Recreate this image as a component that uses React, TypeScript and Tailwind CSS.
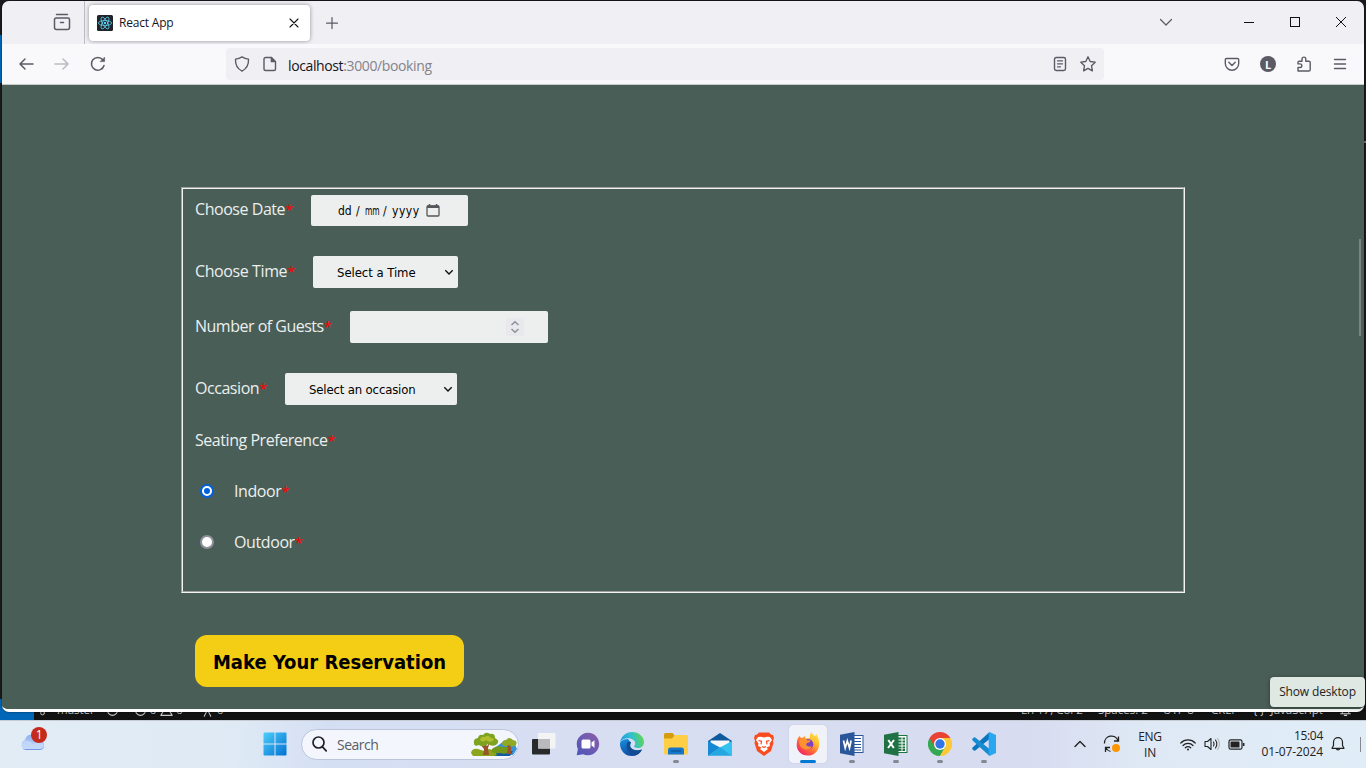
import React from "react";

type IconProps = { children: React.ReactNode; size?: number; box?: string; className?: string };

function Line({ children, size = 16, box = "0 0 16 16", className = "" }: IconProps) {
  return (
    <svg width={size} height={size} viewBox={box} fill="none" stroke="currentColor" strokeWidth="1.25" strokeLinecap="round" strokeLinejoin="round" className={"shrink-0 " + className}>
      {children}
    </svg>
  );
}

function TitleBar() {
  return (
    <div className="flex h-[43px] shrink-0 items-center bg-[#f0eff4] text-[#5b5b66]">
      <div className="flex h-full w-[83px] items-center justify-end border-r border-[#bdbcc3] pr-[13px]">
        <Line size={18} box="0 0 18 18" className="mb-px">
          <path d="M3.500 1.500h11M3 5h12a1.500 1.500 0 0 1 1.500 1.500v8a2 2 0 0 1-2 2H3.500a2 2 0 0 1-2-2v-8A1.500 1.500 0 0 1 3 5zM7.500 9.500h3" strokeWidth="1.500" />
        </Line>
      </div>
      <div className="ml-[4px] flex h-[36px] w-[221px] items-center rounded-[4px] bg-white pr-[10px] pl-[8px] shadow-[0_0_4px_rgba(0,0,0,0.4)]">
        <svg width="16" height="16" viewBox="0 0 16 16" fill="none" stroke="#5ed3f3" strokeWidth="0.8">
          <rect width="16" height="16" rx="1.500" fill="#20232a" stroke="none" />
          <ellipse cx="8" cy="8" rx="6.600" ry="2.500" />
          <ellipse cx="8" cy="8" rx="6.600" ry="2.500" transform="rotate(60 8 8)" />
          <ellipse cx="8" cy="8" rx="6.600" ry="2.500" transform="rotate(120 8 8)" />
          <circle cx="8" cy="8" r="1.200" fill="#5ed3f3" stroke="none" />
        </svg>
        <span className="ml-[6px] text-[12px] tracking-[-0.2px] text-[#15141a]">React App</span>
        <Line size={12} box="0 0 12 12" className="ml-auto text-[#15141a]">
          <path d="M2 2l8 8M10 2l-8 8" strokeWidth="1.100" />
        </Line>
      </div>
      <Line size={14} box="0 0 14 14" className="ml-[15px]">
        <path d="M7 1.500v11M1.500 7h11" />
      </Line>
      <Line size={14} box="0 0 14 14" className="mb-[2px] ml-auto">
        <path d="M1.500 4.500L7 10l5.500-5.500" />
      </Line>
      <svg width="102" height="12" viewBox="0 0 102 12" fill="none" stroke="#111" className="mr-[18px] mb-px ml-[71px]">
        <path d="M0 6.500h10" />
        <rect x="46.500" y="1.500" width="9" height="9" />
        <path d="M92 1l10 10M102 1l-10 10" />
      </svg>
    </div>
  );
}

function ToolBar() {
  return (
    <div className="flex h-[41px] shrink-0 items-center border-b border-[#c8c9cc] bg-[#f9f9fb] pr-[16px] pl-[16px] text-[#5b5b66]">
      <Line><path d="M15 8H2M7 3L2 8l5 5" strokeWidth="1.500" /></Line>
      <Line className="ml-[20px] text-[#b9b9c0]"><path d="M1 8h13M9 3l5 5-5 5" strokeWidth="1.500" /></Line>
      <Line className="ml-[20px]">
        <path d="M14 9.500A6.400 6.400 0 1 1 12.800 3.800" strokeWidth="1.500" />
        <path d="M14.600 1.400v4.200h-4.200z" fill="currentColor" strokeWidth="0.600" />
      </Line>
      <div className="ml-[120px] flex h-[32px] w-[878px] items-center rounded-[4px] bg-[#f0eff4] px-[8px]">
        <Line><path d="M8 .9c1.900 1.300 4 2 6.500 2.200.3 5.200-1.600 9.400-6.500 12C3.100 12.500 1.200 8.300 1.500 3.100 4 2.900 6.100 2.200 8 .9z" strokeWidth="1.400" /></Line>
        <Line className="ml-[12px]">
          <path d="M3.500 1.500h5.800l4.200 4.200v7.300a1.500 1.500 0 0 1-1.500 1.500H3.500A1.500 1.500 0 0 1 2 13V3a1.500 1.500 0 0 1 1.500-1.500z" strokeWidth="1.400" />
          <path d="M9.300 1.500v4.200h4.200z" fill="currentColor" />
        </Line>
        <span className="mt-[2px] ml-[10px] text-[14px] tracking-[-0.38px] text-[#15141a]">localhost<span className="text-[#84838b]">:3000/booking</span></span>
        <Line className="ml-auto">
          <rect x="2.500" y="1.500" width="11" height="13" rx="1.700" strokeWidth="1.400" />
          <path d="M5.500 4.800h5M5.500 7.800h5M5.500 10.800h3" />
        </Line>
        <Line className="ml-[12px]">
          <path d="M8 .8l2.200 4.700 5 .7-3.700 3.500.9 5.200L8 12.400l-4.400 2.500.9-5.200L.8 6.200l5-.7z" strokeWidth="1.350" />
        </Line>
      </div>
      <Line className="ml-auto">
        <path d="M2.500 2.500h11A1.300 1.300 0 0 1 14.700 3.800V7.500a6.700 6.700 0 0 1-13.400 0V3.800A1.300 1.300 0 0 1 2.500 2.500zM4.800 6.300L8 9.400l3.200-3.100" strokeWidth="1.400" />
      </Line>
      <div className="ml-[20px] flex size-[16px] items-center justify-center rounded-full bg-[#5b5b66] text-[11px] leading-none font-bold text-white">L</div>
      <Line className="ml-[20px]">
        <path d="M2 15v-3.500h2a1.800 1.800 0 0 0 0-3.600H2V6.500A1.300 1.300 0 0 1 3.300 5.200H6V3a1.900 1.900 0 0 1 3.800 0v2.200h3A1.300 1.300 0 0 1 14.200 6.500v7.200a1.300 1.300 0 0 1-1.300 1.300z" strokeWidth="1.400" />
      </Line>
      <Line className="ml-[20px]"><path d="M2.500 3.500h11M2.500 8h11M2.500 12.500h11" strokeWidth="1.400" /></Line>
    </div>
  );
}

const star = <span className="inline-block w-[6px] text-[15px] leading-none tracking-normal text-[#ff0000]">*</span>;

function Chevron() {
  return (
    <svg width="10" height="10" viewBox="0 0 10 10" fill="none" stroke="#111" strokeWidth="1.400">
      <path d="M1.300 3.200L5 6.900l3.700-3.700" />
    </svg>
  );
}

function BookingPage() {
  return (
    <div className="flex min-h-0 flex-1 bg-[#495e57] pt-[102px] pl-[179px]">
      <div className="w-[1004px]">
        <div className="h-[406px] border-2 border-[#f4f4f4] [border-style:groove] pt-[6px] pl-[12px] text-[16px] leading-[20px] tracking-[-0.45px] text-[#edefee]">
          <div className="flex h-[31px] items-center">
            <span className="w-[116px] pb-[3px]">Choose Date{star}</span>
            <div className="flex h-[31px] w-[157px] items-center rounded-[2px] bg-[#edefee] pl-[27px] font-['DejaVu_Sans_Condensed','DejaVu_Sans',sans-serif] text-[12px] text-black">
              <span className="flex w-[88px] items-center pt-px tracking-normal">
                <span className="w-[18px]">dd</span>
                <span className="w-[9px]">/</span>
                <span className="w-[18px]"><span className="inline-block origin-left scale-x-[0.7]">mm</span></span>
                <span className="w-[9px]">/</span>
                <span className="tracking-[0.5px]">yyyy</span>
              </span>
              <svg width="14" height="14" viewBox="0 0 14 14" fill="none" stroke="#55565a">
                <rect x="1" y="2" width="12" height="10" rx="1" strokeWidth="1.300" />
                <path d="M1 2.800h12" strokeWidth="2.400" />
                <path d="M3.500 0v3M10.500 0v3" strokeWidth="1.500" />
              </svg>
            </div>
          </div>
          <div className="mt-[30px] flex h-[32px] items-center">
            <span className="w-[118px] pb-[2px] tracking-[-0.4px]">Choose Time{star}</span>
            <div className="flex h-[32px] w-[145px] items-center justify-between rounded-[2px] bg-[#edefee] pr-[4px] pl-[24px] font-['DejaVu_Sans_Condensed','DejaVu_Sans',sans-serif] text-[13px] tracking-[-0.05px] text-black">
              <span className="pt-[2px]">Select a Time</span><Chevron />
            </div>
          </div>
          <div className="mt-[23px] flex h-[32px] items-center">
            <span className="w-[155px] pb-[2px] tracking-[-0.5px]">Number of Guests{star}</span>
            <div className="flex h-[32px] w-[198px] items-center justify-end rounded-[2px] bg-[#edefee] pr-[24px]">
              <div className="flex h-[18px] w-[18px] items-center justify-center bg-[#e9e9ed]">
                <svg width="10" height="14" viewBox="0 0 10 14" fill="none" stroke="#8f8f9d" strokeWidth="1.500">
                  <path d="M1.500 5L5 1.800 8.500 5M1.500 9L5 12.200 8.500 9" />
                </svg>
              </div>
            </div>
          </div>
          <div className="mt-[30px] flex h-[32px] items-center">
            <span className="w-[90px] pb-[2px]">Occasion{star}</span>
            <div className="flex h-[32px] w-[172px] items-center justify-between rounded-[2px] bg-[#edefee] pr-[4px] pl-[24px] font-['DejaVu_Sans_Condensed','DejaVu_Sans',sans-serif] text-[13px] tracking-[-0.15px] text-black">
              <span className="pt-[2px]">Select an occasion</span><Chevron />
            </div>
          </div>
          <div className="mt-[25px] h-[20px]">Seating Preference{star}</div>
          <div className="mt-[31px] flex h-[20px] items-center">
            <span className="ml-[5px] flex size-[14px] items-center justify-center rounded-full border-2 border-[#0060df] bg-white">
              <span className="size-[6px] rounded-full bg-[#0060df]" />
            </span>
            <span className="ml-[20px] tracking-[-0.4px]">Indoor{star}</span>
          </div>
          <div className="mt-[31px] flex h-[20px] items-center">
            <span className="ml-[5px] size-[14px] rounded-full border-2 border-[#8f8f9d] bg-white" />
            <span className="ml-[20px] tracking-[-0.4px]">Outdoor{star}</span>
          </div>
        </div>
        <div className="mt-[42px] ml-[14px] flex h-[52px] w-[269px] items-center justify-center rounded-[12px] bg-[#f4ce14] pt-px font-['DejaVu_Sans_Condensed','DejaVu_Sans',sans-serif] text-[20px] font-bold whitespace-nowrap text-black">
          Make Your Reservation
        </div>
      </div>
      <div className="mt-[52px] mr-[3px] ml-auto h-[97px] w-[2px] bg-[#7d8582]" />
    </div>
  );
}

function StatusStrip() {
  return (
    <div className="absolute top-[699px] left-0 flex h-[22px] w-full items-center bg-[#121212] text-[11.500px] text-[#c8c8c8]">
      <div className="flex h-full w-[34px] items-center justify-center bg-[#0067b8] font-mono text-[11px]">&gt;</div>
      <Line size={12} className="ml-[4px]"><circle cx="6" cy="12" r="2.500" /><path d="M6 9V2" /></Line>
      <span className="ml-[7px]">master</span>
      <Line size={13} className="ml-[11px]"><circle cx="8" cy="8" r="6" /></Line>
      <Line size={13} className="ml-[15px]"><circle cx="8" cy="8" r="6" /></Line>
      <span className="ml-[3px]">0</span>
      <Line size={13} className="ml-[4px]"><path d="M8 2l7 12H1z" /></Line>
      <span className="ml-[3px]">0</span>
      <Line size={13} className="ml-[18px]"><path d="M8 3v5M4 15l4-8 4 8M2 8h12" /></Line>
      <span className="ml-[3px]">0</span>
      <span className="ml-auto w-[77px]">Ln 17, Col 2</span>
      <span className="w-[65px]">Spaces: 2</span>
      <span className="w-[48px]">UTF-8</span>
      <span className="w-[42px]">CRLF</span>
      <span className="w-[86px] whitespace-nowrap">{"{ }"}&nbsp; JavaScript</span>
      <Line size={13} className="mr-[14px]"><path d="M2 12h12M6.500 14h3M4 12V6a4 4 0 0 1 8 0v6" /></Line>
    </div>
  );
}

type SlotProps = { children: React.ReactNode; open?: boolean; active?: boolean };

function Slot({ children, open, active }: SlotProps) {
  return (
    <div className="flex h-[48px] w-[44px] shrink-0 items-center justify-center">
      <div className={active ? "relative flex h-[38px] w-[38px] items-center justify-center rounded-[4px] bg-[#f0f2fa] shadow-[0_0_1px_rgba(0,0,0,0.3)]" : "relative flex h-[38px] w-[38px] items-center justify-center"}>
        {children}
        {active && <span className="absolute bottom-0 left-[11px] h-[3px] w-[16px] rounded-full bg-[#0078d4]" />}
        {open && <span className="absolute bottom-0 left-[16px] h-[3px] w-[6px] rounded-full bg-[#858892]" />}
      </div>
    </div>
  );
}

function Taskbar() {
  return (
    <div className="relative flex h-[48px] shrink-0 items-center bg-[linear-gradient(90deg,#e1ecf5_0%,#dfeaf5_17%,#d5dff4_24%,#d8def2_45%,#d7dcf0_75%,#dfe9f5_84%,#e0edf7_100%)] text-[#222] shadow-[inset_0_1px_0_#c6cad3]">
      <div className="flex h-full w-[253px] items-start pt-[7px] pl-[19px]">
        <svg width="30" height="30" viewBox="0 0 30 30">
          <defs>
            <linearGradient id="cloud" x1="0" y1="0" x2="0" y2="1"><stop stopColor="#8fb1ef" /><stop offset="1" stopColor="#c6dbfa" /></linearGradient>
          </defs>
          <path d="M7 23a5.300 5.300 0 0 1-1-10A6.500 6.500 0 0 1 18 11a6 6 0 0 1 7 6 5 5 0 0 1-4 6z" fill="url(#cloud)" />
          <path d="M5 14q5-2 9 3 3-3 9-1l2 4-3 3H6l-4-4z" fill="#c4d9fb" opacity=".8" />
          <path d="M2 20q2 3 5 3h14q4-1 4-4-1 3-4 3H6q-3 0-4-2z" fill="#6f97e4" />
          <circle cx="20" cy="8" r="8" fill="#c42b1c" />
          <text x="20.300" y="12" textAnchor="middle" fontSize="12" fill="white" fontFamily="Open Sans, sans-serif">1</text>
        </svg>
      </div>
      <Slot>
        <svg width="24" height="24" viewBox="0 0 24 24">
          <defs><linearGradient id="win" gradientUnits="userSpaceOnUse" x1="0" y1="0" x2="24" y2="24"><stop stopColor="#4fd0fb" /><stop offset="1" stopColor="#006fd0" /></linearGradient></defs>
          <path d="M1.500 .5H11.500V11.500H.5V1.500a1 1 0 0 1 1-1zM12.500 .5h10a1 1 0 0 1 1 1v10h-11zM.5 12.500h11v11h-10a1 1 0 0 1-1-1zM12.500 12.500h11v10a1 1 0 0 1-1 1h-10z" fill="url(#win)" />
        </svg>
      </Slot>
      <div className="mr-[3px] ml-[4px] flex h-[31px] w-[218px] items-center overflow-hidden rounded-full border border-[#bdc5da] bg-[#f3f6fd] pl-[10px]">
        <svg width="15" height="16" viewBox="0 0 15 16" fill="none" stroke="#202124" strokeWidth="1.700" strokeLinecap="round"><circle cx="6.500" cy="6.500" r="5.500" /><path d="M10.500 10.800l3.700 4" /></svg>
        <span className="ml-[10px] text-[14px] tracking-[-0.5px] text-[#5b5d64]">Search</span>
        <svg width="48" height="25" viewBox="0 0 48 25" className="ml-auto">
          <path d="M17 23l9-8 8-6 10 1 3 7-4 6z" fill="#3792d8" />
          <path d="M24 20q7-3 12 0l7-1-3 5H20z" fill="#1459a4" />
          <path d="M1 21q1-5 7-4l6 2 5-2q6 1 8 6l-3 1H3z" fill="#8ba51d" />
          <path d="M23 16q5-3 10-1 7-1 8 4-5 4-11 2-6 1-9-2z" fill="#72971b" />
          <path d="M14 11l3 3 3-4-2 6 1 7h-6l1-6-4-5zM39 12l2 3v7h-4l1-6-2-4z" fill="#995529" />
          <path d="M4 11q-1-4 4-5 1-4 5-3 3-4 7-1 5-1 5 4 6 3 1 7-4 2-8-1-5 4-9 1-5 2-5-2z" fill="#7da321" />
          <path d="M10 8q1-4 5-3 3-3 6 1 4 0 2 3-4 2-7-1-3 3-6 0z" fill="#b0bd2d" />
          <path d="M32 12q0-4 4-4 3-4 7 0 5 1 3 5-4 3-7 0-5 3-7-1z" fill="#8fa925" />
        </svg>
      </div>
      <Slot>
        <svg width="25" height="24" viewBox="0 0 25 24">
          <rect x="0" y="7" width="18" height="15.500" rx="1" fill="#282a2c" />
          <rect x="6" y="1" width="17.500" height="15.500" rx="1" fill="#f4f4f4" />
          <path d="M6 7h12v9.500H6z" fill="#b8babd" />
        </svg>
      </Slot>
      <Slot>
        <svg width="24" height="24" viewBox="0 0 24 24">
          <defs><linearGradient id="chat" x1="0" y1="1" x2="1" y2="0"><stop stopColor="#4c55bb" /><stop offset="1" stopColor="#8f5fa8" /></linearGradient></defs>
          <path d="M12 .7a11.300 11.300 0 1 1-5 21.500L.7 23.300 1.900 17A11.300 11.300 0 0 1 12 .7z" fill="url(#chat)" />
          <rect x="5.500" y="7.500" width="9" height="9" rx="1.500" fill="white" />
          <path d="M15.500 10.500l3-2.300v7.600l-3-2.300z" fill="white" />
        </svg>
      </Slot>
      <Slot>
        <svg width="24" height="24" viewBox="0 0 24 24">
          <defs>
            <linearGradient id="edgeA" x1="0" y1="0.500" x2="1" y2="0.300"><stop stopColor="#1b9de2" /><stop offset=".5" stopColor="#32bfd0" /><stop offset="1" stopColor="#62d849" /></linearGradient>
            <linearGradient id="edgeB" x1="0" y1="0" x2="0.300" y2="1"><stop stopColor="#1790dd" /><stop offset="1" stopColor="#0d4fa5" /></linearGradient>
          </defs>
          <path d="M0 11Q2 7 8 7l3 4q-1.500 3 0 5 4 3.500 11 1.500-3 6.500-10 6.500A12 12 0 0 1 0 11z" fill="url(#edgeB)" />
          <path d="M8 9.500c-3.500 5-.5 12 6 14.300 3.500-.6 6.500-3 8-6.300-4 2-8 1.200-10.500-1C9.500 14.500 9.500 12 11 10z" fill="#134c91" />
          <path d="M0 11C1 4 6 0 12 0c7 0 12 5 12 10 0 4-3 6-6 6-2.500 0-4-.8-4-1.700 0-.7 1.200-1 1.200-2.900C15.200 8 11 6.300 8 6.300 4 6.300 1 8 0 11z" fill="url(#edgeA)" />
        </svg>
      </Slot>
      <Slot open>
        <svg width="24" height="22" viewBox="0 0 24 22">
          <path d="M0 1.500A1.500 1.500 0 0 1 1.500 0h7l2.500 3v3H0z" fill="#d79c0b" />
          <path d="M0 5.500h8L11 2h11.500A1.500 1.500 0 0 1 24 3.500V20a1.500 1.500 0 0 1-1.500 1.500h-21A1.500 1.500 0 0 1 0 20z" fill="#fdce46" />
          <path d="M4 21.500V17a2.500 2.500 0 0 1 2.500-2.500h11A2.500 2.500 0 0 1 20 17v4.500z" fill="#1477cb" />
          <path d="M7 18h10" stroke="#0c599f" strokeWidth="1.500" />
        </svg>
      </Slot>
      <Slot>
        <svg width="24" height="23" viewBox="0 0 24 23">
          <path d="M0 8L12 0l12 8v4H0z" fill="#0e5a9c" />
          <path d="M2.500 7.500h19V10L12 17 2.500 10z" fill="#f6f8fb" />
          <path d="M0 8l12 6.500L0 23z" fill="#1689d4" /><path d="M24 8l-12 6.500L24 23z" fill="#36c2ee" />
          <path d="M0 22.700L12 14l12 8.700z" fill="#25a7e2" />
        </svg>
      </Slot>
      <Slot>
        <svg width="20" height="24" viewBox="0 0 20 24">
          <path d="M5 .5h10l2 2 2 .5 1 3-1 3 .5 2-2.500 8L10 24l-7-5-2.500-8 .5-2-1-3 1-3L3 2.500z" fill="#fb4c20" />
          <path d="M4 5l3-.3L10 5.500l3-.8 3 .3 2 3-2.500 3.500.5 2.500-3.500 1.500 1.500 1.500L10 20l-4-3 1.500-1.500L4 14l.5-2.500L2 8z" fill="white" />
          <path d="M4.500 8.500l3 .8-.5 3M15.500 8.500l-3 .8.5 3M8 14.500l2 .8 2-.8" stroke="#fb4c20" strokeWidth="1.200" fill="none" />
        </svg>
      </Slot>
      <Slot active>
        <svg width="24" height="24" viewBox="0 0 24 24">
          <defs><linearGradient id="fox" x1="1" y1="0" x2="0.200" y2="1"><stop stopColor="#fff04a" /><stop offset=".35" stopColor="#ffc034" /><stop offset=".65" stopColor="#ff6a35" /><stop offset="1" stopColor="#f11c6d" /></linearGradient></defs>
          <path d="M2 6l1.500-2L5 6l2-.5C8 4 9.500 4 9.500 4L9 6.500 14 6q-1-3 1.500-6 1 2.500 3 4 1.500-.5 2-2 2 3.500 2.500 7C24.500 17 19 23.500 12 23.500S.7 18.500.7 13Q.7 8.500 2 6z" fill="url(#fox)" />
          <circle cx="12.300" cy="12.300" r="5" fill="#7b42c2" />
          <path d="M3 8q3-2.500 6-1.500l2.500 2q3-.5 3 .5-.5 1.500-3.500 2-1.500 1-.5 2.500 2.500 2 5.500.5-2 4-6 3.500Q3 17 3 8z" fill="#ff9130" />
        </svg>
      </Slot>
      <Slot open>
        <svg width="24" height="24" viewBox="0 0 24 24">
          <rect x="12" y="3.500" width="11" height="17" fill="white" stroke="#2b579a" />
          <path d="M14 6.500h7M14 9.500h7M14 12.500h7M14 15.500h7M14 18h7" stroke="#2b579a" strokeWidth="1.200" />
          <path d="M0 2.700L14.500 0v24L0 21.300z" fill="#2b579a" />
          <path d="M3.500 8.500l1.700 7.500L7.300 9l2.200 7 1.600-7.500" fill="none" stroke="white" strokeWidth="1.700" />
        </svg>
      </Slot>
      <Slot open>
        <svg width="24" height="24" viewBox="0 0 24 24">
          <rect x="12" y="3.500" width="11" height="17" fill="white" stroke="#207245" />
          <path d="M14 6.500h7M14 9.500h7M14 12.500h7M14 15.500h7M14 18h7" stroke="#207245" strokeWidth="1.800" />
          <path d="M18 4v16" stroke="white" />
          <path d="M0 2.700L14.500 0v24L0 21.300z" fill="#207245" />
          <path d="M4.300 8l5.500 8M10 8l-6 8" fill="none" stroke="white" strokeWidth="2" />
        </svg>
      </Slot>
      <Slot open>
        <svg width="24" height="24" viewBox="0 0 24 24">
          <path d="M12 12L1.600 6A12 12 0 0 0 12 24l5.200-9z" fill="#34a853" />
          <path d="M22.400 6H12l5.200 9L12 24A12 12 0 0 0 22.400 6z" fill="#fcc934" />
          <path d="M1.600 6L6.800 15 12 6h10.400A12 12 0 0 0 1.600 6z" fill="#ea4335" />
          <circle cx="12" cy="12" r="6" fill="white" /><circle cx="12" cy="12" r="4.700" fill="#2f75e6" />
        </svg>
      </Slot>
      <Slot open>
        <svg width="24" height="24" viewBox="0 0 24 24">
          <path d="M17.500 0v7L3 18.700l-1.200-.1L.3 17.200v-1.400z" fill="#0b76bd" />
          <path d="M17.500 24v-7L3 5.300l-1.200.1L.3 6.800v1.400z" fill="#168bd0" />
          <path d="M17.500 0L24 3v18l-6.500 3q-.8-.5-.8-1.500v-21Q16.700.5 17.500 0z" fill="#29a7ee" />
        </svg>
      </Slot>
      <div className="ml-auto flex w-[32px] justify-center"><Line size={12} box="0 0 12 12" className="text-[#222]"><path d="M1 8.500l5-5 5 5" strokeWidth="1.400" /></Line></div>
      <div className="flex w-[32px] justify-center">
        <svg width="18" height="18" viewBox="0 0 18 18" fill="none" stroke="#222" strokeWidth="1.300">
          <path d="M1.500 8.500A7 7 0 0 1 15 5.500M15.500 1.500v4.500h-4.500M2.500 17v-4.500H7M2.500 12.500q1.500 3 5 4" />
          <circle cx="13" cy="13" r="4" fill="#ff9500" stroke="none" />
        </svg>
      </div>
      <div className="pt-px w-[44px] text-center text-[12px] leading-[16px] tracking-[-0.3px]">ENG<br />IN</div>
      <div className="ml-[4px] flex w-[24px] justify-center">
        <svg width="16" height="13" viewBox="0 0 16 13" fill="none" stroke="#222" strokeWidth="1.200" strokeLinecap="round">
          <path d="M.8 5a10 10 0 0 1 14.400 0M3 7.500a7 7 0 0 1 10 0M5.300 9.800a4 4 0 0 1 5.400 0" /><circle cx="8" cy="11.500" r="1" fill="#222" stroke="none" />
        </svg>
      </div>
      <div className="flex w-[24px] justify-center">
        <svg width="17" height="14" viewBox="0 0 17 14" fill="none" stroke="#222" strokeWidth="1.100" strokeLinejoin="round" strokeLinecap="round">
          <path d="M1 4.500h2.500L7 1.500v11L3.500 9.500H1zM9.500 5q1.300 2 0 4M11.500 3q2.700 4 0 8" /><path d="M13.500 1.500q4 5.500 0 11" stroke="#aeb3bb" />
        </svg>
      </div>
      <div className="flex w-[24px] justify-center">
        <svg width="17" height="11" viewBox="0 0 17 11" fill="none" stroke="#222"><rect x="1" y=".8" width="13" height="9.400" rx="1.800" strokeWidth="1.200" /><rect x="2.500" y="2.500" width="9" height="6" rx=".5" fill="#222" stroke="none" /><path d="M15.700 4v3" strokeWidth="1.500" /></svg>
      </div>
      <div className="w-[75px] text-right text-[12px] leading-[16px] whitespace-nowrap"><span className="tracking-[-0.3px]">15:04</span><br /><span className="tracking-[-0.1px]">01-07-2024</span></div>
      <div className="ml-[3px] flex w-[24px] justify-center">
        <svg width="14" height="16" viewBox="0 0 14 16" fill="none" stroke="#222" strokeWidth="1.200" strokeLinejoin="round"><path d="M2.500 6.200a4.500 4.500 0 0 1 9 0v3.300l1.500 2.800H1l1.500-2.800zM5.200 12.500a1.900 1.900 0 0 0 3.600 0" /></svg>
      </div>
      <div className="mr-[5px] ml-[10px] h-[15px] w-px bg-[#85888d]" />
    </div>
  );
}

export default function App() {
  return (
    <div className="relative flex h-[768px] w-[1366px] flex-col overflow-hidden bg-[#1a191b] font-['Open_Sans','Noto_Sans',sans-serif]">
      <div className="absolute top-[35px] left-0 h-[48px] w-[2px] bg-[#0067b8]" />
      <div className="absolute top-[141px] right-0 h-[2px] w-[2px] bg-[#777]" />
      <StatusStrip />
      <div className="h-[720px] shrink-0 px-[2px] pt-px">
        <div className="relative flex h-[711px] flex-col overflow-hidden rounded-[7px] border-b-[3px] border-white bg-[#495e57] shadow-[0_0_2px_rgba(0,0,0,0.7)]">
          <TitleBar />
          <ToolBar />
          <BookingPage />
        </div>
      </div>
      <Taskbar />
      <div className="absolute top-[677px] left-[1270px] flex h-[30px] w-[95px] items-center justify-center rounded-[4px] bg-[#dfe8e3] text-[12px] tracking-[-0.15px] text-[#222] shadow-[0_1px_4px_rgba(0,0,0,0.4)]">Show desktop</div>
    </div>
  );
}
